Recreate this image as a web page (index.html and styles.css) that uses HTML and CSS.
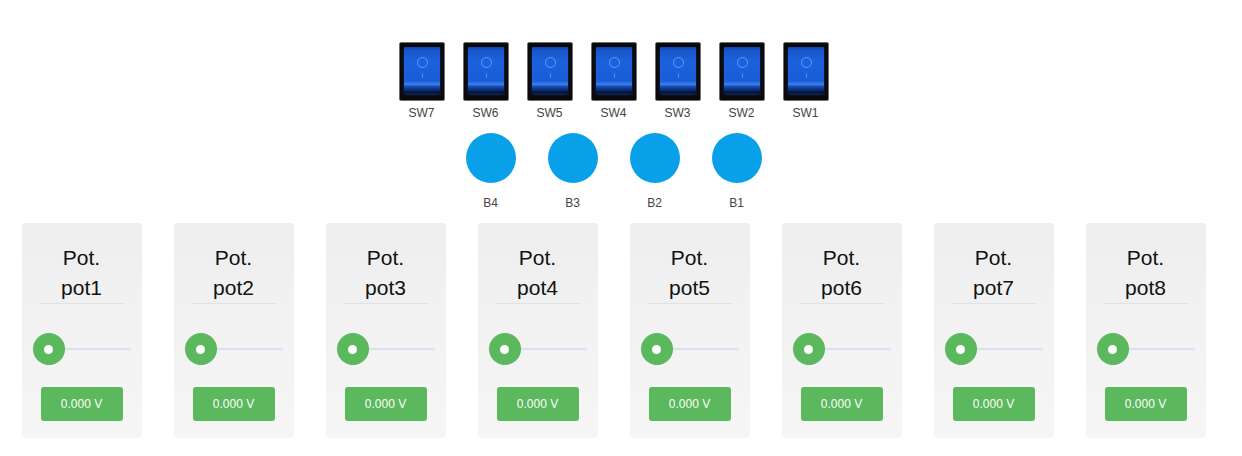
FILE: index.html
```html
<!DOCTYPE html>
<html>
<head>
<meta charset="utf-8">
<link rel="stylesheet" href="styles.css">
</head>
<body>
<div class="page">
  <div class="switches">
    <div class="sw"><div class="switch"><div class="rocker"></div></div><div class="lbl">SW7</div></div>
    <div class="sw"><div class="switch"><div class="rocker"></div></div><div class="lbl">SW6</div></div>
    <div class="sw"><div class="switch"><div class="rocker"></div></div><div class="lbl">SW5</div></div>
    <div class="sw"><div class="switch"><div class="rocker"></div></div><div class="lbl">SW4</div></div>
    <div class="sw"><div class="switch"><div class="rocker"></div></div><div class="lbl">SW3</div></div>
    <div class="sw"><div class="switch"><div class="rocker"></div></div><div class="lbl">SW2</div></div>
    <div class="sw"><div class="switch"><div class="rocker"></div></div><div class="lbl">SW1</div></div>
  </div>
  <div class="buttons">
    <div class="btn"><div class="dot"></div><div class="lbl">B4</div></div>
    <div class="btn"><div class="dot"></div><div class="lbl">B3</div></div>
    <div class="btn"><div class="dot"></div><div class="lbl">B2</div></div>
    <div class="btn"><div class="dot"></div><div class="lbl">B1</div></div>
  </div>
  <div class="cards">
    <div class="card"><div class="title">Pot.<br>pot1</div><div class="rule"></div><div class="slider"><div class="thumb"></div><div class="track"></div></div><div class="value">0.000 V</div></div>
    <div class="card"><div class="title">Pot.<br>pot2</div><div class="rule"></div><div class="slider"><div class="thumb"></div><div class="track"></div></div><div class="value">0.000 V</div></div>
    <div class="card"><div class="title">Pot.<br>pot3</div><div class="rule"></div><div class="slider"><div class="thumb"></div><div class="track"></div></div><div class="value">0.000 V</div></div>
    <div class="card"><div class="title">Pot.<br>pot4</div><div class="rule"></div><div class="slider"><div class="thumb"></div><div class="track"></div></div><div class="value">0.000 V</div></div>
    <div class="card"><div class="title">Pot.<br>pot5</div><div class="rule"></div><div class="slider"><div class="thumb"></div><div class="track"></div></div><div class="value">0.000 V</div></div>
    <div class="card"><div class="title">Pot.<br>pot6</div><div class="rule"></div><div class="slider"><div class="thumb"></div><div class="track"></div></div><div class="value">0.000 V</div></div>
    <div class="card"><div class="title">Pot.<br>pot7</div><div class="rule"></div><div class="slider"><div class="thumb"></div><div class="track"></div></div><div class="value">0.000 V</div></div>
    <div class="card"><div class="title">Pot.<br>pot8</div><div class="rule"></div><div class="slider"><div class="thumb"></div><div class="track"></div></div><div class="value">0.000 V</div></div>
  </div>
</div>
</body>
</html>
```

FILE: styles.css
```css
* { box-sizing: border-box; }
html, body { margin: 0; padding: 0; background: #fff; }
body { font-family: "Liberation Sans", Arial, sans-serif; color: #222; }

.page {
  width: 1227px;
  padding-top: 42px;
  display: flex;
  flex-direction: column;
  align-items: center;
}

.switches { display: flex; }
.sw { width: 64px; display: flex; flex-direction: column; align-items: center; }
.switch {
  width: 46px;
  height: 59px;
  background: #0a0a0a;
  border: 1px solid #707070;
  border-radius: 2px;
  padding: 4px 4px 7px;
  display: flex;
}
.rocker {
  flex: 1;
  position: relative;
  border-radius: 1px;
  background: linear-gradient(to bottom,
    #1243a8 0%, #1857cc 8%, #1c62dc 30%, #1a5dd6 74%, #3274e4 79%, #4282ec 81%,
    #1a52c0 85%, #0e3588 91%, #071d52 97%, #030b20 100%);
  box-shadow: 0 2px 3px rgba(20, 70, 180, 0.5);
}
.rocker::before {
  content: "";
  position: absolute;
  left: 50%;
  top: 10px;
  width: 9px;
  height: 9px;
  margin-left: -4.5px;
  border: 1.5px solid #6a9aec;
  border-radius: 50%;
}
.rocker::after {
  content: "";
  position: absolute;
  left: 50%;
  top: 26px;
  width: 1px;
  height: 5px;
  background: #5588e4;
}

.lbl {
  margin-top: 5px;
  font-size: 12px;
  line-height: 14px;
  color: #444;
}

.buttons { display: flex; margin-top: 13px; }
.btn { width: 82px; display: flex; flex-direction: column; align-items: center; }
.dot { width: 50px; height: 50px; border-radius: 50%; background: #08a0e8; }
.btn .lbl { margin-top: 13px; }

.cards { display: flex; gap: 32px; margin-top: 13px; }
.card {
  width: 120px;
  height: 215px;
  border-radius: 4px;
  background: linear-gradient(to bottom, #eeeeee, #f6f6f6);
  padding: 20px 11px 17px;
  display: flex;
  flex-direction: column;
  align-items: center;
}
.title {
  font-size: 21px;
  line-height: 30px;
  color: #111;
  text-align: center;
}
.rule { width: 85px; height: 1px; background: #e2e2e2; }
.slider {
  width: 98px;
  height: 32px;
  margin-top: 29px;
  display: flex;
  align-items: center;
}
.thumb {
  width: 32px;
  height: 32px;
  flex: none;
  border-radius: 50%;
  background: #5cb85c;
  display: flex;
  align-items: center;
  justify-content: center;
}
.thumb::after {
  content: "";
  width: 9px;
  height: 9px;
  border-radius: 50%;
  background: #fff;
}
.track { flex: 1; height: 2px; background: #dbe1f5; }
.value {
  margin-top: 22px;
  width: 82px;
  height: 34px;
  border-radius: 3px;
  background: #5cb85c;
  color: #fff;
  font-size: 12px;
  line-height: 34px;
  text-align: center;
}
```
